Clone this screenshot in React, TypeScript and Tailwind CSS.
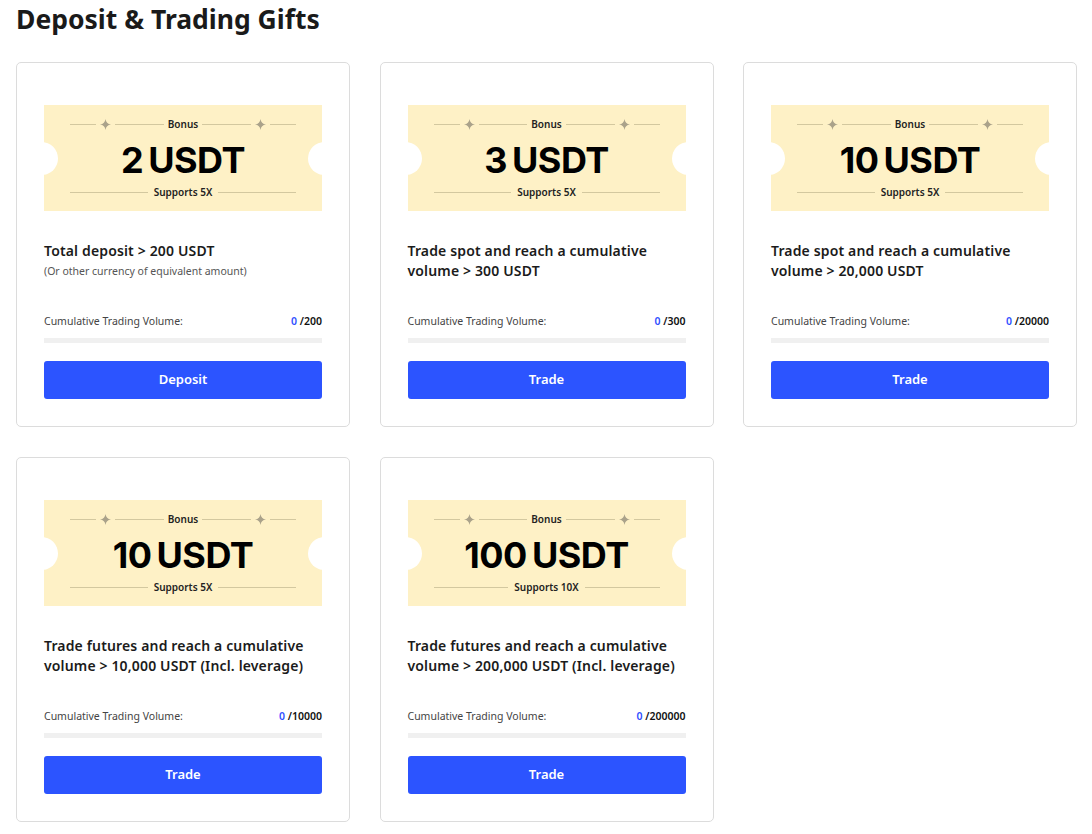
import React from 'react';

type Gift = {
  amount: string;
  leverage: string;
  title: string;
  note?: string;
  target: string;
  action: string;
};

const gifts: Gift[] = [
  { amount: '2', leverage: '5X', title: 'Total deposit > 200 USDT', note: '(Or other currency of equivalent amount)', target: '200', action: 'Deposit' },
  { amount: '3', leverage: '5X', title: 'Trade spot and reach a cumulative volume > 300 USDT', target: '300', action: 'Trade' },
  { amount: '10', leverage: '5X', title: 'Trade spot and reach a cumulative volume > 20,000 USDT', target: '20000', action: 'Trade' },
  { amount: '10', leverage: '5X', title: 'Trade futures and reach a cumulative volume > 10,000 USDT (Incl. leverage)', target: '10000', action: 'Trade' },
  { amount: '100', leverage: '10X', title: 'Trade futures and reach a cumulative volume > 200,000 USDT (Incl. leverage)', target: '200000', action: 'Trade' },
];

function Sparkle() {
  return (
    <svg width="11" height="11" viewBox="0 0 10 10" className="shrink-0">
      <path d="M5 0 Q5.5 4.5 10 5 Q5.5 5.5 5 10 Q4.5 5.5 0 5 Q4.5 4.5 5 0Z" fill="#aaa28a" />
    </svg>
  );
}

function Rule({ className = '' }: { className?: string }) {
  return <span className={`h-px bg-[#d3c89f] ${className}`} />;
}

function Coupon({ amount, leverage }: { amount: string; leverage: string }) {
  return (
    <div className="relative h-[106px] overflow-hidden bg-[#fef1c6]">
      <span className="absolute left-[-19px] top-[37px] h-[33px] w-[33px] rounded-full bg-white" />
      <span className="absolute right-[-19px] top-[37px] h-[33px] w-[33px] rounded-full bg-white" />
      <div className="flex h-full flex-col items-center px-[26px] pt-[12px]">
        <div className="flex w-full items-center text-[10px] font-semibold text-[#222]">
          <Rule className="w-[26px]" />
          <span className="mx-[4px]"><Sparkle /></span>
          <Rule className="flex-1" />
          <span className="mx-[4px] leading-[14px]">Bonus</span>
          <Rule className="flex-1" />
          <span className="mx-[4px]"><Sparkle /></span>
          <Rule className="w-[26px]" />
        </div>
        <div className="mt-[9px] flex items-center gap-[5px] font-['Inter',sans-serif] text-[36px] font-bold leading-[40px] tracking-[-0.5px] text-black">
          <span>{amount}</span>
          <span>USDT</span>
        </div>
        <div className="mt-[5px] flex w-full items-center text-[10px] font-semibold text-[#222]">
          <Rule className="flex-1" />
          <span className="mx-[6px] leading-[14px]">Supports {leverage}</span>
          <Rule className="flex-1" />
        </div>
      </div>
    </div>
  );
}

function GiftCard({ gift }: { gift: Gift }) {
  return (
    <div className="flex w-[334px] flex-col rounded-[5px] border border-[#dcdcdc] bg-white px-[27px] pb-[27px] pt-[42px]">
      <Coupon amount={gift.amount} leverage={gift.leverage} />
      <div className="mt-[30px] h-[62px]">
        <p className="text-[14px] font-semibold leading-[20px] tracking-[0.15px] text-[#1b1b1b]">{gift.title}</p>
        {gift.note && <p className="mt-[1px] text-[10.5px] leading-[18px] text-[#555]">{gift.note}</p>}
      </div>
      <div className="mt-[11px] flex h-[16px] items-center justify-between text-[10.5px]">
        <span className="text-[#444]">Cumulative Trading Volume:</span>
        <span className="font-semibold">
          <span className="text-[#3050ff]">0</span> <span className="text-[#111]">/{gift.target}</span>
        </span>
      </div>
      <div className="mt-[8px] h-[5px] bg-[#f0f0f0]" />
      <button
        type="button"
        className="mt-[18px] h-[38px] rounded-[3px] bg-[#2c54ff] text-[13px] font-semibold text-white"
      >
        {gift.action}
      </button>
    </div>
  );
}

export default function App() {
  return (
    <div className="min-h-[834px] bg-white px-4 font-['Noto_Sans',sans-serif]">
      <h1 className="pt-[2px] text-[26.5px] font-bold leading-[34px] text-[#1a1a1a]">
        Deposit &amp; Trading Gifts
      </h1>
      <div className="mt-[26px] grid grid-cols-[334px_334px_334px] gap-x-[29.5px] gap-y-[30px]">
        {gifts.map((g, i) => (
          <GiftCard key={i} gift={g} />
        ))}
      </div>
    </div>
  );
}
